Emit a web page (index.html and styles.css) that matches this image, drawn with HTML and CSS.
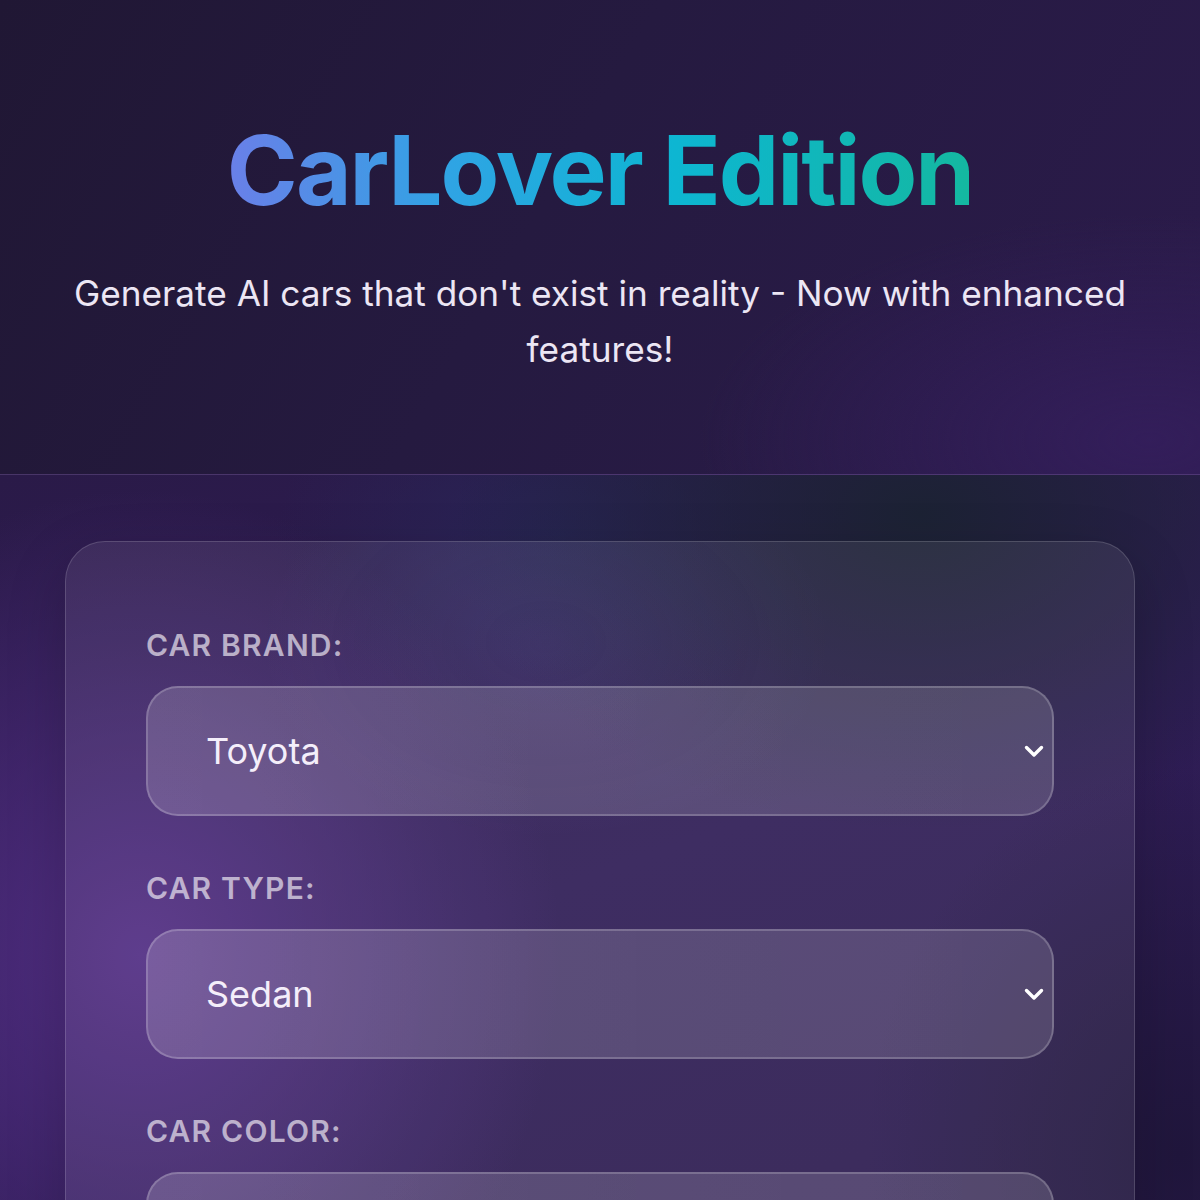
FILE: index.html
```html
<!DOCTYPE html>
<html lang="en">
<head>
<meta charset="utf-8">
<title>CarLover Edition</title>
<link rel="stylesheet" href="styles.css">
</head>
<body>
  <header class="hero">
    <h1 class="title">CarLover Edition</h1>
    <p class="subtitle">Generate AI cars that don't exist in reality - Now with enhanced features!</p>
  </header>
  <main class="main">
    <section class="card">
      <div class="field">
        <label class="label" for="brand">Car Brand:</label>
        <div class="select-wrap">
          <select id="brand" class="select">
            <option>Toyota</option>
            <option>Honda</option>
            <option>BMW</option>
          </select>
          <svg class="chevron" viewBox="0 0 20 13" width="20" height="13"><path d="M2.5 2.5L10 10l7.5-7.5" fill="none" stroke="#fff" stroke-width="3.4" stroke-linecap="round" stroke-linejoin="round"/></svg>
        </div>
      </div>
      <div class="field">
        <label class="label" for="type">Car Type:</label>
        <div class="select-wrap">
          <select id="type" class="select">
            <option>Sedan</option>
            <option>SUV</option>
            <option>Coupe</option>
          </select>
          <svg class="chevron" viewBox="0 0 20 13" width="20" height="13"><path d="M2.5 2.5L10 10l7.5-7.5" fill="none" stroke="#fff" stroke-width="3.4" stroke-linecap="round" stroke-linejoin="round"/></svg>
        </div>
      </div>
      <div class="field">
        <label class="label" for="color">Car Color:</label>
        <div class="select-wrap">
          <select id="color" class="select">
            <option>Red</option>
            <option>Blue</option>
          </select>
          <svg class="chevron" viewBox="0 0 20 13" width="20" height="13"><path d="M2.5 2.5L10 10l7.5-7.5" fill="none" stroke="#fff" stroke-width="3.4" stroke-linecap="round" stroke-linejoin="round"/></svg>
        </div>
      </div>
    </section>
  </main>
</body>
</html>
```
FILE: styles.css
```css
* { box-sizing: border-box; }
html, body { margin: 0; padding: 0; }
body {
  font-family: Inter, "Noto Sans", sans-serif;
  background: #2a1b4a;
  color: #fff;
  min-height: 1200px;
}
.hero {
  padding: 113px 64px 97px;
  text-align: center;
  border-bottom: 1px solid rgba(150, 110, 200, 0.35);
  background:
    radial-gradient(ellipse 600px 300px at 1150px 440px, rgba(52, 30, 92, 0.9), transparent 75%),
    linear-gradient(120deg, #201734 0%, #251a40 45%, #2b1b4b 100%);
}
.title {
  margin: 0;
  font-size: 96px;
  font-weight: 700;
  line-height: 1.2;
  letter-spacing: -2px;
  background: linear-gradient(90deg, #6a7fe8 0%, #2fa4e4 30%, #0db6d2 60%, #14b8a0 100%);
  -webkit-background-clip: text;
  background-clip: text;
  color: transparent;
  display: inline-block;
}
.subtitle {
  margin: 37px auto 0;
  max-width: 1080px;
  font-size: 35.2px;
  line-height: 56px;
  font-weight: 400;
  color: #ece6f4;
}
.main {
  padding: 66px 65px 0;
  min-height: 725px;
  background:
    radial-gradient(ellipse 620px 420px at 920px 40px, rgba(28, 34, 52, 1), transparent 75%),
    radial-gradient(ellipse 380px 240px at 560px 60px, rgba(38, 40, 88, 0.7), transparent 75%),
    radial-gradient(ellipse 560px 620px at 140px 480px, rgba(82, 46, 132, 1), transparent 75%),
    radial-gradient(ellipse 420px 520px at 1180px 680px, rgba(32, 22, 60, 1), transparent 75%),
    linear-gradient(160deg, #2a1a48 0%, #2f1d56 45%, #2b1b4c 100%);
}
.card {
  border: 1px solid rgba(255, 255, 255, 0.15);
  border-bottom: none;
  border-radius: 40px 40px 0 0;
  padding: 79px 80px 60px;
  min-height: 700px;
  background:
    radial-gradient(ellipse 380px 260px at 480px 100px, rgba(110, 100, 200, 0.1), transparent 75%),
    rgba(255, 255, 255, 0.075);
  box-shadow: 0 20px 60px rgba(0, 0, 0, 0.2);
}
.field {
  display: flex;
  flex-direction: column;
  gap: 17px;
  margin-bottom: 48px;
}
.label {
  font-size: 30px;
  font-weight: 600;
  line-height: 48px;
  letter-spacing: 1.2px;
  text-transform: uppercase;
  color: rgba(232, 226, 238, 0.72);
}
.select-wrap {
  position: relative;
}
.select {
  -webkit-appearance: none;
  appearance: none;
  width: 100%;
  height: 130px;
  padding: 0 60px 0 58px;
  border: 2px solid rgba(255, 255, 255, 0.2);
  border-radius: 32px;
  background: linear-gradient(90deg, rgba(255, 255, 255, 0.17) 0%, rgba(255, 255, 255, 0.15) 60%, rgba(255, 255, 255, 0.14) 100%);
  color: #f4eefa;
  font-family: Inter, "Noto Sans", sans-serif;
  font-size: 36px;
  outline: none;
}
.chevron {
  position: absolute;
  right: 10px;
  top: 50%;
  margin-top: -6px;
  pointer-events: none;
}
```
